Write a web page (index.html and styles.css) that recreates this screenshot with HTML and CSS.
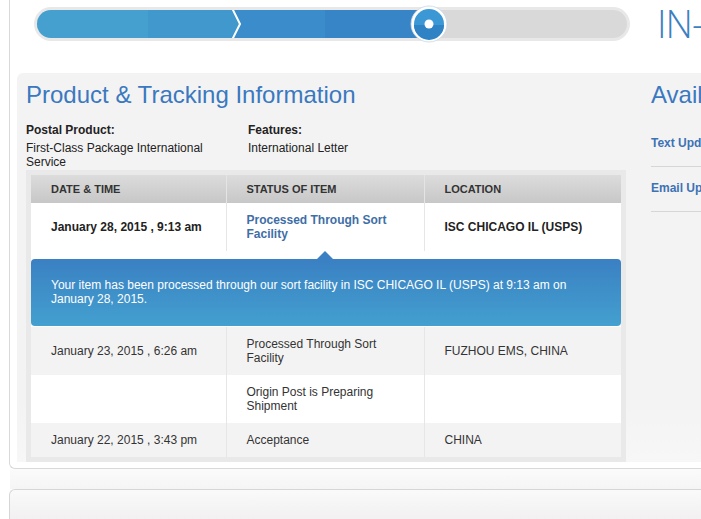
FILE: index.html
```html
<!DOCTYPE html>
<html>
<head>
<meta charset="utf-8">
<link rel="stylesheet" href="styles.css">
<title>Tracking</title>
</head>
<body>
<div class="page">
  <div class="box1">
    <div class="progress-row">
      <svg class="progress" width="598" height="39" viewBox="0 0 598 39">
        <defs><clipPath id="pc"><rect x="4" y="5" width="590" height="28" rx="14"/></clipPath></defs>
        <rect x="1" y="2" width="596" height="34" rx="17" fill="#e8e8e8"/>
        <rect x="4" y="5" width="590" height="28" rx="14" fill="#d9d9d9"/>
        <g clip-path="url(#pc)">
          <rect x="0" y="5" width="115" height="28" fill="#45a0cf"/>
          <rect x="115" y="5" width="290" height="28" fill="#3784c6"/>
          <rect x="199" y="5" width="93" height="28" fill="#3a8dca"/>
          <polygon points="115,5 199,5 207,19 199,33 115,33" fill="#4098cd"/>
          <polyline points="199,3 207,19 199,35" fill="none" stroke="#fff" stroke-width="2"/>
        </g>
        <circle cx="396" cy="19" r="18" fill="#fff" stroke="#c9d6e2" stroke-width="0.8"/>
        <circle cx="396" cy="19" r="15" fill="#3b98d5"/>
        <path d="M381,20 A15,15 0 0 0 411,20 Z" fill="#2f82c3"/>
        <circle cx="396" cy="19" r="4.5" fill="#fff"/>
      </svg>
      <div class="status-word">IN-TRANSIT</div>
    </div>
    <div class="panel">
      <div class="main-col">
        <h1 class="title">Product &amp; Tracking Information</h1>
        <div class="info">
          <div class="info-col info-col-first">
            <div class="info-label">Postal Product:</div>
            <div class="info-value">First-Class Package International Service</div>
          </div>
          <div class="info-col">
            <div class="info-label">Features:</div>
            <div class="info-value">International Letter</div>
          </div>
        </div>
        <div class="frame">
          <table class="track">
            <colgroup><col class="c1"><col class="c2"><col class="c3"></colgroup>
            <thead>
              <tr><th>Date &amp; Time</th><th class="div">Status of Item</th><th class="div">Location</th></tr>
            </thead>
            <tbody>
              <tr class="latest">
                <td class="date">January 28, 2015 , 9:13 am</td>
                <td class="div status-link">Processed Through Sort Facility</td>
                <td class="div">ISC CHICAGO IL (USPS)</td>
              </tr>
              <tr class="callout-row">
                <td colspan="3">
                  <div class="callout">Your item has been processed through our sort facility in ISC CHICAGO IL (USPS) at 9:13 am on January 28, 2015.</div>
                </td>
              </tr>
              <tr class="shade">
                <td class="date">January 23, 2015 , 6:26 am</td>
                <td class="div">Processed Through Sort Facility</td>
                <td class="div">FUZHOU EMS, CHINA</td>
              </tr>
              <tr>
                <td class="date"></td>
                <td class="div">Origin Post is Preparing Shipment</td>
                <td class="div"></td>
              </tr>
              <tr class="shade">
                <td class="date">January 22, 2015 , 3:43 pm</td>
                <td class="div">Acceptance</td>
                <td class="div">CHINA</td>
              </tr>
            </tbody>
          </table>
        </div>
      </div>
      <div class="side-col">
        <h2 class="title">Available Actions</h2>
        <ul class="actions">
          <li>Text Updates</li>
          <li>Email Updates</li>
        </ul>
      </div>
    </div>
  </div>
  <div class="gap"></div>
  <div class="box2"></div>
</div>
</body>
</html>
```
FILE: styles.css
```css
html, body {
  margin: 0;
  padding: 0;
  overflow: hidden;
  background: #fff;
}
body {
  font-family: "Liberation Sans", Arial, sans-serif;
  font-size: 12px;
  color: #222;
}
.page {
  width: 1100px;
}
.box1 {
  margin-left: 9px;
  border-left: 1px solid #d9d9d9;
  border-bottom: 1px solid #d9d9d9;
  border-bottom-left-radius: 6px;
  padding: 0 0 6px 7px;
}
.progress-row {
  display: flex;
  align-items: flex-start;
  padding-top: 5px;
  height: 73px;
  box-sizing: border-box;
}
.progress {
  display: block;
  margin-left: 16px;
}
.status-word {
  margin-left: 26px;
  margin-top: -1px;
  font-family: "Open Sans", "Lato", sans-serif;
  font-weight: 300;
  font-size: 38px;
  line-height: 39px;
  color: #3d7fc1;
  letter-spacing: -1px;
  white-space: nowrap;
}
.panel {
  display: flex;
  background: linear-gradient(#f4f3f4 85%, #f7f7f7);
  border-top-left-radius: 6px;
  padding: 8px 0 0 9px;
}
.main-col {
  width: 600px;
  flex: none;
}
.side-col {
  margin-left: 25px;
  width: 300px;
  flex: none;
}
.title {
  margin: 0;
  font-size: 24px;
  line-height: 28px;
  font-weight: normal;
  color: #3a79bf;
  white-space: nowrap;
}
.info {
  display: flex;
  margin-top: 14px;
  line-height: 14px;
}
.info-col-first {
  width: 200px;
  margin-right: 22px;
}
.info-label {
  font-weight: bold;
}
.info-value {
  margin-top: 4px;
}
.frame {
  margin-top: 1px;
  background: #e9e9e9;
  padding: 5px;
}
.track {
  width: 590px;
  table-layout: fixed;
  border-collapse: collapse;
  border-spacing: 0;
}
.c1 { width: 195px; }
.c2 { width: 198px; }
.c3 { width: 197px; }
.track th {
  height: 28px;
  padding: 0 20px;
  text-align: left;
  font-size: 11px;
  font-weight: bold;
  text-transform: uppercase;
  color: #333;
  background: linear-gradient(#dcdcdc, #c7c7c7);
}
.track th.div {
  border-left: 1px solid #e4e4e4;
}
.track td {
  padding: 10px 20px;
  line-height: 14px;
  color: #333;
  background: #fff;
  vertical-align: middle;
}
.track td.div {
  border-left: 1px solid #e6e6e6;
}
.track td.date {
  white-space: nowrap;
}
.track tr.shade td {
  background: #f3f3f3;
}
.latest td {
  font-weight: bold;
  color: #222;
}
.latest td.status-link {
  color: #3e6ea6;
}
.callout-row td {
  padding: 8px 0 1px 0;
  background: #fff;
}
.callout {
  position: relative;
  background: linear-gradient(#3a80c3, #43a0cf);
  border-radius: 4px;
  padding: 19px 20px 20px;
  color: #fff;
  line-height: 14px;
}
.callout::before {
  content: "";
  position: absolute;
  left: 286px;
  top: -8px;
  border-left: 8px solid transparent;
  border-right: 8px solid transparent;
  border-bottom: 8px solid #3a80c3;
}
.actions {
  list-style: none;
  margin: 13px 0 0 0;
  padding: 0;
}
.actions li {
  padding: 14px 0 16px;
  line-height: 14px;
  font-weight: bold;
  color: #3d72b5;
  border-bottom: 1px solid #d6d6d6;
  white-space: nowrap;
}
.gap {
  margin-left: 10px;
  height: 20px;
  background: linear-gradient(#fbfbfb, #f5f5f5);
}
.box2 {
  margin-left: 9px;
  height: 100px;
  border-left: 1px solid #d6d6d6;
  border-top: 1px solid #d6d6d6;
  border-top-left-radius: 6px;
  background: linear-gradient(#fafafa, #f2f0f1 30%);
}
```
